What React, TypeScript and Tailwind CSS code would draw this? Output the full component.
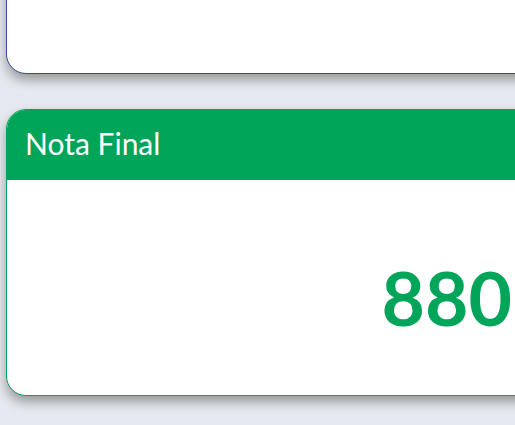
export default function App() {
  return (
    <div className="w-[515px] h-[425px] overflow-hidden bg-[#e6e9ef]" style={{ fontFamily: 'Lato, "Open Sans", sans-serif' }}>
      <div className="w-[560px] pl-[6px]">
        <div className="-mt-[100px] h-[174px] rounded-[20px] border border-[#3d4a93] bg-white shadow-[0_6px_12px_rgba(0,0,0,0.35)]" />
        <div className="mt-[35px] h-[287px] rounded-[20px] border border-[#00a559] bg-white overflow-hidden shadow-[0_6px_12px_rgba(0,0,0,0.35)] flex flex-col">
          <div className="h-[70px] bg-[#00a559] flex items-center px-[18px] pb-[5px]">
            <span className="text-white text-[30px] leading-none">Nota Final</span>
          </div>
          <div className="flex-1 flex items-center justify-end pr-[47px] pt-[20px]">
            <span className="text-[#00a559] text-[75px] font-bold leading-none">880</span>
          </div>
        </div>
      </div>
    </div>
  );
}
